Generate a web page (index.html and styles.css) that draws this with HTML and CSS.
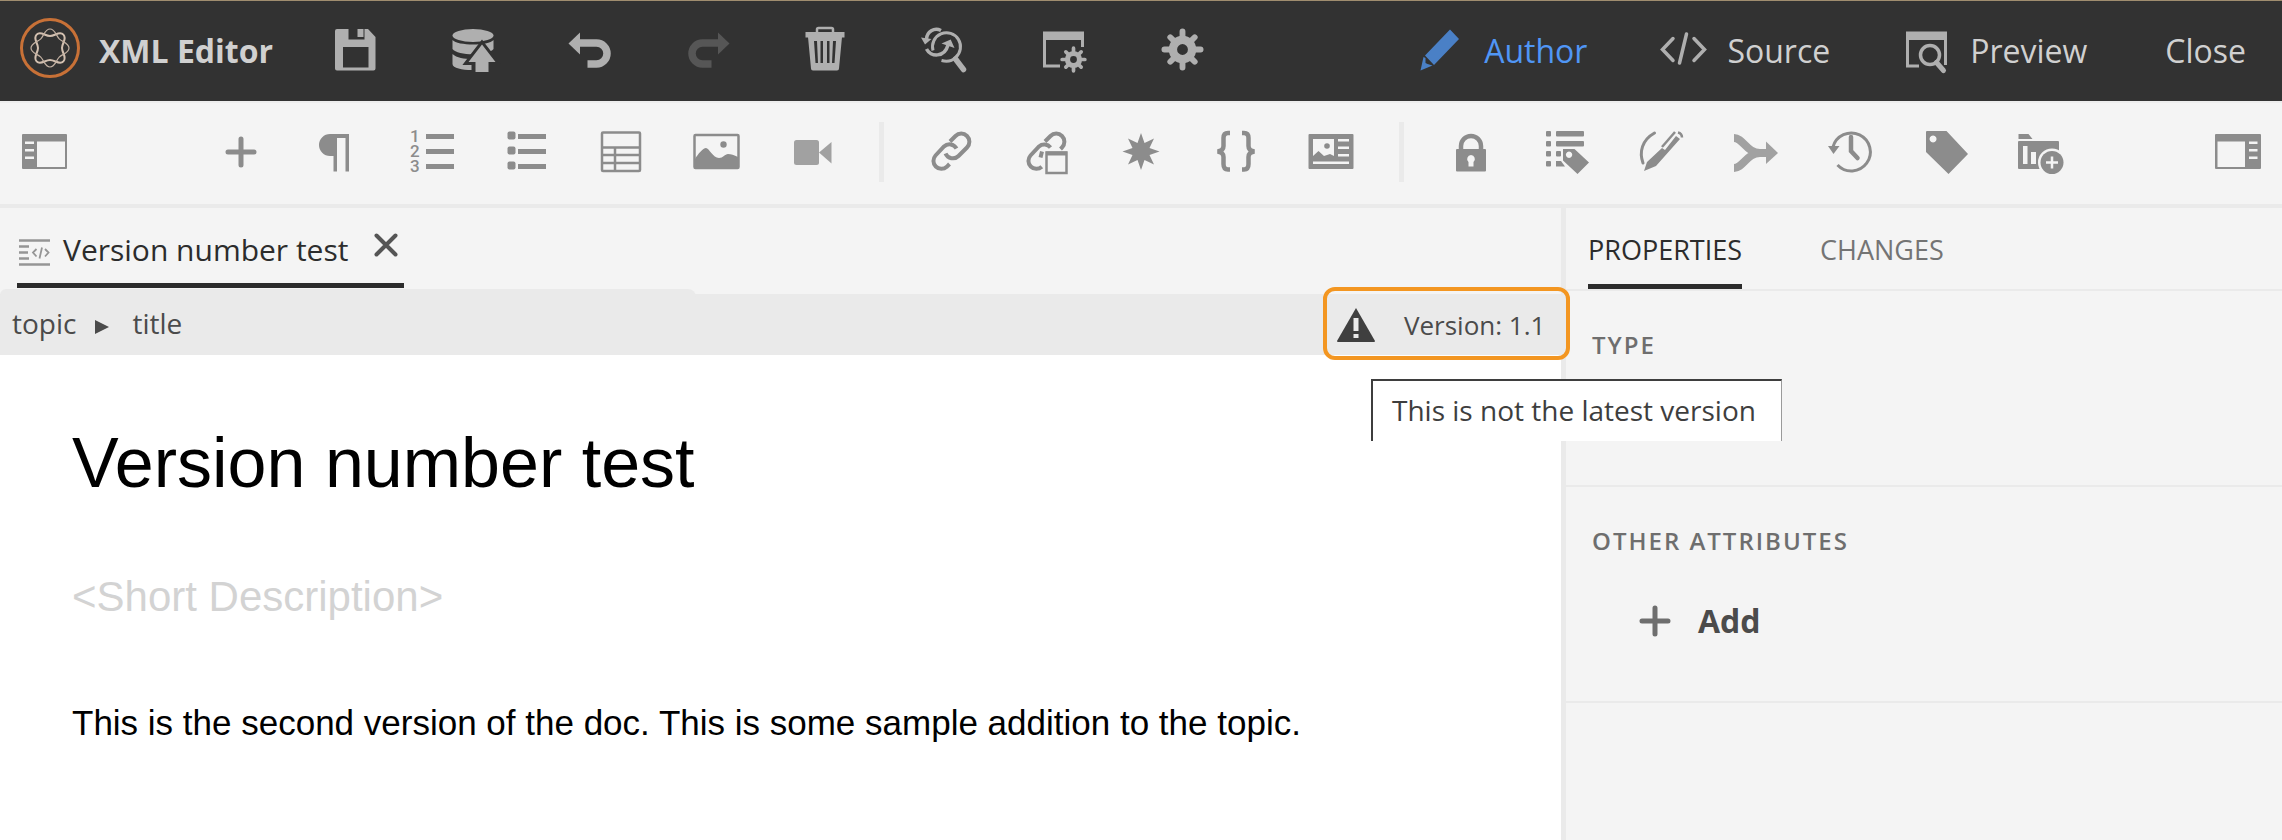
FILE: index.html
```
<!DOCTYPE html>
<html lang="en">
<head>
<meta charset="utf-8">
<title>XML Editor</title>
<link rel="stylesheet" href="styles.css">
</head>
<body>
<svg class="defs" aria-hidden="true">
  <symbol id="gear" viewBox="-22 -22 44 44">
    <circle r="9.800" fill="none" stroke="currentColor" stroke-width="8.500"/>
    <path d="M0-18.500v6M0 18.500v-6M-18.500 0h6M18.500 0h-6M-12.500-12.500l4 4M12.500-12.500l-4 4M-12.500 12.500l4-4M12.500 12.500l-4-4" stroke="currentColor" stroke-width="6" stroke-linecap="round"/>
  </symbol>
  <symbol id="plus" viewBox="0 0 48 48">
    <path d="M24 11v26M11 24h26" stroke="currentColor" stroke-width="5" stroke-linecap="round"/>
  </symbol>
</svg>

<header class="topbar">
  <svg class="logo" viewBox="0 0 60 60" fill="none">
    <circle cx="30" cy="30" r="28.500" stroke="#c87137" stroke-width="3"/>
    <path stroke="#d3c0b0" stroke-width="2" d="M30 18C35 18 39.500 12.700 43.400 16.600S42 25 42 30 47.300 39.500 43.400 43.400 35 42 30 42 20.500 47.300 16.600 43.400 18 35 18 30 12.700 20.500 16.600 16.600 25 18 30 18z"/>
    <path stroke="#c3b1a2" stroke-width="1.200" d="M30 11C35 11 36 17.600 39.200 20.800S49 25 49 30 42.400 36 39.200 39.200 35 49 30 49 24 42.400 20.800 39.200 11 35 11 30 17.600 24 20.800 20.800 25 11 30 11z"/>
  </svg>
  <h1 class="brand">XML Editor</h1>
  <div class="tools">
    <button class="icon-btn" aria-label="Save"><svg viewBox="0 0 48 48"><path fill="currentColor" fill-rule="evenodd" d="M6 2h11.500v10.500h16V2H37l7.500 8v31.500a2 2 0 0 1-2 2H6a2 2 0 0 1-2-2V4a2 2 0 0 1 2-2zM12 20v20.500h25.500V20z"/><path fill="currentColor" d="M26.500 2h6v8h-6z"/></svg></button>
    <button class="icon-btn" aria-label="Save to repository"><svg viewBox="0 0 48 48"><g fill="currentColor"><ellipse cx="24" cy="8.500" rx="20.500" ry="6.500"/><path d="M3.500 13c5 6 36 6 41 0v9c-5 7-36 7-41 0zM3.500 27c4 4 12 5 19 5v11c-9 0-19-2-19-6z"/></g><path d="M33 17.500L46.500 35H39.500V45H26.500V35H19.500z" fill="currentColor" stroke="#323232" stroke-width="6" paint-order="stroke"/></svg></button>
    <button class="icon-btn" aria-label="Undo"><svg viewBox="0 0 48 48"><path d="M12 16h17.500a10.500 10.500 0 0 1 0 21H20.500" fill="none" stroke="currentColor" stroke-width="7.500"/><path d="M13 5.500v22L1.500 16.500z" fill="currentColor"/></svg></button>
    <button class="icon-btn" aria-label="Redo" disabled><svg viewBox="0 0 48 48"><path d="M35 16H17.500a10.500 10.500 0 0 0 0 21H26.500" fill="none" stroke="currentColor" stroke-width="7.500"/><path d="M33 5.500v22L44.500 16.500z" fill="currentColor"/></svg></button>
    <button class="icon-btn" aria-label="Delete"><svg viewBox="0 0 48 48"><path d="M14 6V2.500a1.500 1.500 0 0 1 1.500-1.500h13A1.500 1.500 0 0 1 30 2.500V6" fill="none" stroke="currentColor" stroke-width="2.500"/><path d="M2.500 5h39v5.500h-39z" fill="currentColor"/><path fill="currentColor" fill-rule="evenodd" d="M5 10h34l-3 31.500a2 2 0 0 1-2 2H10a2 2 0 0 1-2-2zM11 14l1.500 22h2.500L14 14zM17.500 14v22H20V14zM24 14v22h2.500V14zM30 14l-1 22h2.500L33 14z"/></svg></button>
    <button class="icon-btn" aria-label="Find and replace"><svg viewBox="0 0 48 48" fill="none" stroke="currentColor" stroke-width="3"><path d="M12 23.500A14 14 0 1 1 34.500 30.500C31 34 26 35 20.500 33.500"/><path d="M34.500 32l8 10.500" stroke-width="5.500" stroke-linecap="round"/><path d="M20 3.500C13 0 6 5 5.500 12" stroke-width="3.500"/><path d="M5.500 22c4 8 18 9 21.500-4" stroke-width="3.500"/><path d="M0 10.500l10.500 1.500L4 17.500zM20.500 16.500L29.700 12.500 33.500 21z" fill="currentColor" stroke="none"/></svg></button>
    <button class="icon-btn" aria-label="Window settings"><svg viewBox="0 0 48 48"><path d="M43.500 20V6H5.500v33H21" fill="none" stroke="currentColor" stroke-width="3"/><path d="M4 5h41v8H4z" fill="currentColor"/><circle cx="34.500" cy="32.500" r="10.500" fill="#323232"/><use href="#gear" x="21" y="19" width="27" height="27"/></svg></button>
    <button class="icon-btn" aria-label="Settings"><svg viewBox="0 0 48 48"><use href="#gear" x="4" y="1" width="43" height="43"/></svg></button>
  </div>
  <nav class="modes">
    <button class="mode mode-active"><svg viewBox="0 0 48 48"><path fill="currentColor" d="M34 2.500l9 9.500L18 38 9 28.500zM7.500 30l2 1v5l2 1 5 1.500L4.500 43.500z"/></svg>Author</button>
    <button class="mode"><svg viewBox="0 0 48 48" fill="none" stroke="currentColor" stroke-width="4" stroke-linecap="round"><path d="M14 11.500L3.500 22.500 14 33.500M35 11.500l10.500 11L35 33.500M27.500 7l-7 29" stroke-width="3.500"/></svg>Source</button>
    <button class="mode"><svg viewBox="0 0 48 48"><path d="M43.500 38V6H5.500v33H17" fill="none" stroke="currentColor" stroke-width="3"/><path d="M4 5h41v8H4z" fill="currentColor"/><circle cx="28" cy="28" r="9.500" fill="none" stroke="currentColor" stroke-width="3.500"/><path d="M34.500 35.500l7 8" stroke="currentColor" stroke-width="5" stroke-linecap="round"/></svg>Preview</button>
    <button class="mode mode-close">Close</button>
  </nav>
</header>

<div class="toolbar" role="toolbar" aria-label="Editing">
  <button class="icon-btn" aria-label="Toggle left panel"><svg viewBox="0 0 48 48"><path fill="currentColor" fill-rule="evenodd" d="M3 6h43a1 1 0 0 1 1 1v33a1 1 0 0 1-1 1H3a1 1 0 0 1-1-1V7a1 1 0 0 1 1-1zM17 13.500V39h28V13.500zM5 13.500v2.500h9v-2.500zM5 21v2.500h9V21zM5 28.500V31h9v-2.500z"/></svg></button>
  <div class="tool-group tool-group-first">
    <button class="icon-btn" aria-label="Insert element"><svg viewBox="0 0 48 48"><use href="#plus" width="48" height="48"/></svg></button>
    <button class="icon-btn" aria-label="Paragraph"><svg viewBox="0 0 48 48"><path fill="currentColor" d="M18 6h19v37.500h-3.500V10H25v33.500h-3.500V28H18A11 11 0 0 1 18 6z"/></svg></button>
    <button class="icon-btn" aria-label="Numbered list"><svg viewBox="0 0 48 48" fill="currentColor"><path d="M19 6h28v5H19zM19 21h28v5H19zM19 36h28v5H19z"/><text class="digit" x="3" y="14">1</text><text class="digit" x="3" y="29">2</text><text class="digit" x="3" y="44">3</text></svg></button>
    <button class="icon-btn" aria-label="Bulleted list"><svg viewBox="0 0 48 48" fill="currentColor"><path d="M16 6h28v5H16zM16 21h28v5H16zM16 36h28v5H16z"/><rect x="5.500" y="3.500" width="8" height="8" rx="2"/><rect x="5.500" y="18.500" width="8" height="8" rx="2"/><rect x="5.500" y="33.500" width="8" height="8" rx="2"/></svg></button>
    <button class="icon-btn" aria-label="Table"><svg viewBox="0 0 48 48" fill="none" stroke="currentColor" stroke-width="2.500"><rect x="5" y="4.500" width="38" height="38.500" rx="1"/><path d="M5 19.500h38M5 27h38M5 35h38M18 20v23"/></svg></button>
    <button class="icon-btn" aria-label="Image"><svg viewBox="0 0 48 48"><rect x="2.500" y="7" width="44" height="33" rx="1" fill="none" stroke="currentColor" stroke-width="2.500"/><path fill="currentColor" d="M3 31c3-5 8-11 11-11s7 10 13 10c4 0 6-4 9-4s6 1 10 3v11H3z"/><circle cx="31.500" cy="16.500" r="3.200" fill="currentColor"/></svg></button>
    <button class="icon-btn light" aria-label="Multimedia"><svg viewBox="0 0 48 48" fill="currentColor"><rect x="7" y="12" width="25" height="25" rx="2.500"/><path d="M32 24.500L44.500 14v21.500z"/></svg></button>
  </div>
  <span class="separator"></span>
  <div class="tool-group">
    <button class="icon-btn" aria-label="Link"><svg viewBox="0 0 48 48" fill="none" stroke="currentColor" stroke-width="4"><path d="M23 13.500l5.500-5.500a8 8 0 0 1 11.500 11.500l-8.500 8.500a8 8 0 0 1-13-2.500"/><path d="M29.500 20.500a8 8 0 0 0-12.500-2L8.500 27.500a8 8 0 0 0 11.300 11.300l2.700-2.800"/></svg></button>
    <button class="icon-btn" aria-label="Cross reference"><svg viewBox="0 0 48 48" fill="none" stroke="currentColor" stroke-width="4"><path d="M23 13.500l5.500-5.500a8 8 0 0 1 11.500 11.500l-1.500 1.500"/><path d="M28.500 19.500a8 8 0 0 0-11.500-1L8.500 27.500a8 8 0 0 0 11.300 11.300M18.500 29.500l1.500-6"/><rect x="24.500" y="24.500" width="20" height="20.500" stroke-width="2.500"/><path d="M24 25.500h21" stroke-width="4"/></svg></button>
    <button class="icon-btn" aria-label="Symbol"><svg viewBox="0 0 48 48"><path fill="currentColor" d="M24 5l3.500 10 9.500-4.500-4.500 9.500 10 3.500-10 3.500 4.500 9.500-9.500-4.500L24 42l-3.500-10-9.500 4.500 4.500-9.500-10-3.500 10-3.500-4.500-9.500 9.500 4.500z"/></svg></button>
    <button class="icon-btn" aria-label="Code"><svg viewBox="0 0 48 48" fill="none" stroke="currentColor" stroke-width="4.500"><path d="M18 5h-2c-3 0-4.500 2-4.500 5v8c0 3-2 5-6 5.500 4 .500 6 2.500 6 5.500v7c0 4 1.500 5.500 4.500 5.500h2M30 5h2c3 0 4.500 2 4.500 5v8c0 3 2 5 6 5.500-4 .500-6 2.500-6 5.500v7c0 4-1.500 5.500-4.500 5.500h-2"/></svg></button>
    <button class="icon-btn" aria-label="Reusable content"><svg viewBox="0 0 48 48"><path fill="currentColor" fill-rule="evenodd" d="M2.500 6h43a1 1 0 0 1 1 1v33a1 1 0 0 1-1 1h-43a1 1 0 0 1-1-1V7a1 1 0 0 1 1-1zM6 11v17l5.500-5L17 28l6-2 4 2V11zM31 11v2.500h11V11zM31 18.500V21h11v-2.500zM31 26v2.500h11V26zM6 33.500V36h36v-2.500z"/><circle cx="20" cy="18" r="2.800" fill="currentColor"/></svg></button>
  </div>
  <span class="separator"></span>
  <div class="tool-group">
    <button class="icon-btn" aria-label="Lock"><svg viewBox="0 0 48 48"><path d="M14 22v-4a10 10 0 0 1 20 0v4" fill="none" stroke="currentColor" stroke-width="4.500"/><path fill="currentColor" fill-rule="evenodd" d="M10 21h28a1 1 0 0 1 1 1v20.500a1 1 0 0 1-1 1H10a1 1 0 0 1-1-1V22a1 1 0 0 1 1-1zM24 27a4 4 0 0 0-2.500 7v4.500h5V34A4 4 0 0 0 24 27z"/></svg></button>
    <button class="icon-btn" aria-label="Condition list"><svg viewBox="0 0 48 48" fill="currentColor"><g><rect x="4" y="3" width="5" height="5.500" rx="1"/><rect x="4" y="13" width="5" height="5.500" rx="1"/><rect x="4" y="23" width="5" height="5.500" rx="1"/><rect x="4" y="33" width="5" height="5.500" rx="1"/><rect x="14" y="3" width="28" height="5.500" rx="1"/><rect x="14" y="13" width="28" height="5.500" rx="1"/><rect x="14" y="23" width="5" height="5.500" rx="1"/><path d="M14 33h5l4 5.500h-9z"/></g><path fill-rule="evenodd" d="M21 21h11.500L47 34.500 35.500 46 21 32.500zM27 23.500a3.200 3.200 0 1 0 .1 0z"/></svg></button>
    <button class="icon-btn" aria-label="Track changes"><svg viewBox="0 0 48 48"><path d="M17.500 5C5 12 2 24 6 35" fill="none" stroke="currentColor" stroke-width="3" stroke-linecap="round"/><path fill="currentColor" d="M25 20l3 2 11-14 4 3-24 27-12 5 3-9z"/><path d="M25 19L38 4" stroke="currentColor" stroke-width="2.500"/><path d="M41 4.500q4 1 4 5" stroke="currentColor" stroke-width="2.500" fill="none"/></svg></button>
    <button class="icon-btn light" aria-label="Merge"><svg viewBox="0 0 48 48"><path d="M2 10c9 0 13 15 26 15h9M2 40c9 0 13-15 26-15" fill="none" stroke="currentColor" stroke-width="8"/><path fill="currentColor" d="M34 13.500L46 25 34 36z"/></svg></button>
    <button class="icon-btn" aria-label="Version history"><svg viewBox="0 0 48 48"><path d="M6 19A19 19 0 1 1 10.500 37" fill="none" stroke="currentColor" stroke-width="3"/><path d="M1 18h11.500L6.500 26z" fill="currentColor"/><path d="M24 9v14l6.500 7" fill="none" stroke="currentColor" stroke-width="4.500" stroke-linecap="round"/></svg></button>
    <button class="icon-btn" aria-label="Version label"><svg viewBox="0 0 48 48"><path fill="currentColor" fill-rule="evenodd" d="M5 3h19.500L46 26 26.500 46 4 24V4a1 1 0 0 1 1-1zM11 7.500a3.500 3.500 0 1 0 .1 0z"/></svg></button>
    <button class="icon-btn" aria-label="Add to collection"><svg viewBox="0 0 48 48"><path fill="currentColor" fill-rule="evenodd" d="M1.500 6h10l4 5h-14zM2 13h39a1 1 0 0 1 1 1v27H2a1 1 0 0 1-1-1V14a1 1 0 0 1 1-1zM6 18v18h4.500V18zM14 24v12h5V24z"/><circle cx="35" cy="34.500" r="11.500" fill="currentColor" stroke="#f4f4f4" stroke-width="5" paint-order="stroke"/><path d="M35 28.500v12M29 34.500h12" stroke="#f4f4f4" stroke-width="2.500"/></svg></button>
  </div>
  <button class="icon-btn toolbar-end" aria-label="Toggle right panel"><svg viewBox="0 0 48 48"><path fill="currentColor" fill-rule="evenodd" d="M2 6h44a1 1 0 0 1 1 1v33a1 1 0 0 1-1 1H2a1 1 0 0 1-1-1V7a1 1 0 0 1 1-1zM3.500 13.500V39H31V13.500zM35 13.500v2.500h8.500v-2.500zM35 21v2.500h8.500V21zM35 28.500V31h8.500v-2.500z"/></svg></button>
</div>

<div class="workspace">
  <main class="editor">
    <div class="doc-tabs">
      <div class="doc-tab">
        <svg class="doc-icon" viewBox="0 0 32 28" fill="none" stroke="#959595" stroke-width="2.500"><path d="M0 2.500h31M0 8.500h10M0 14.500h9M0 20.500h10M0 26.500h31"/><path d="M17.500 11L14 14.500l3.500 4M26 11l3.500 3.500-3.500 4M23 9.500l-2.500 11" stroke-width="1.800"/></svg>
        <span class="doc-name">Version number test</span>
        <button class="doc-close" aria-label="Close tab"><svg viewBox="0 0 24 24"><path d="M2.500 2.500l19 19M21.500 2.500l-19 19" stroke="#555" stroke-width="4" stroke-linecap="round"/></svg></button>
      </div>
    </div>
    <div class="pathbar">
      <nav class="crumbs" aria-label="Element path">
        <a class="crumb" href="#topic">topic</a>
        <svg class="crumb-arrow" viewBox="0 0 14 14"><path d="M0 0l14 7-14 7z" fill="#4b4b4b"/></svg>
        <a class="crumb" href="#title">title</a>
      </nav>
      <div class="version">
        <svg class="warning" viewBox="0 0 38 34"><path d="M19 0l19 33q0 1-1 1H1q-1 0-1-1z" fill="#3f3f3f"/><path d="M19 10v13M19 26v4" stroke="#eaeaea" stroke-width="5"/></svg>
        <span>Version: 1.1</span>
        <div class="tooltip" role="tooltip">This is not the latest version</div>
      </div>
    </div>
    <article class="document" id="topic">
      <h2 class="doc-title" id="title">Version number test</h2>
      <p class="doc-short">&lt;Short Description&gt;</p>
      <p class="doc-body">This is the second version of the doc. This is some sample addition to the topic.</p>
    </article>
  </main>
  <aside class="panel">
    <div class="panel-tabs" role="tablist">
      <button class="panel-tab panel-tab-active" role="tab" aria-selected="true">PROPERTIES</button>
      <button class="panel-tab" role="tab" aria-selected="false">CHANGES</button>
    </div>
    <section class="section section-type"><h3 class="section-title">TYPE</h3></section>
    <section class="section section-other">
      <h3 class="section-title">OTHER ATTRIBUTES</h3>
      <button class="add"><svg viewBox="0 0 48 48"><use href="#plus" width="48" height="48"/></svg>Add</button>
    </section>
  </aside>
</div>
</body>
</html>
```
FILE: styles.css
```
* { box-sizing: border-box; }

body {
  margin: 0;
  min-height: 100vh;
  display: flex;
  flex-direction: column;
  overflow-x: hidden;
  background: #f4f4f4;
  color: #4b4b4b;
  font-family: "Open Sans", "Noto Sans", sans-serif;
}

button {
  padding: 0;
  border: 0;
  background: none;
  color: inherit;
  font: inherit;
  white-space: nowrap;
}

svg { display: block; flex: none; }
h1, h2, h3, p { margin: 0; font-weight: 400; }
.defs { position: absolute; width: 0; height: 0; }

.icon-btn { flex: none; width: 48px; height: 48px; }
.icon-btn svg { width: 48px; height: 48px; overflow: visible; }

/* Top bar */
.topbar {
  display: flex;
  align-items: center;
  height: 101px;
  padding: 0 34px 0 20px;
  border-top: 1px solid #a08d6f;
  background: #323232;
  color: #afafaf;
}
.logo { width: 60px; height: 60px; margin-bottom: 6px; }
.brand {
  margin-left: 19px;
  color: #d0d0d0;
  font-size: 32px;
  font-weight: 700;
  line-height: 48px;
  white-space: nowrap;
}
.tools { display: flex; gap: 70px; margin-left: 58px; }
.tools .icon-btn:disabled { color: #565656; }
.modes { display: flex; gap: 72px; margin-left: auto; }
.mode {
  display: flex;
  align-items: center;
  gap: 20px;
  color: #d0d0d0;
  font-size: 32px;
  line-height: 48px;
}
.mode svg { width: 48px; height: 48px; color: #afafaf; }
.mode-active { color: #5096f5; }
.mode-active svg { color: #4a80c6; }
.mode-close { padding: 0 2px 0 6px; }

/* Editing toolbar */
.toolbar {
  display: flex;
  align-items: center;
  height: 107px;
  padding: 0 20px 4px;
  border-top: 2px solid #ededed;
  border-bottom: 4px solid #eaeaea;
  color: #8c8c8c;
}
.tool-group { display: flex; gap: 47px; }
.tool-group-first { margin-left: 149px; }
.light { color: #a1a1a1; }
.separator { flex: none; width: 5px; height: 60px; margin: 0 43px 0 44px; background: #eaeaea; }
.toolbar-end { margin-left: auto; }
.digit { font-family: Roboto, sans-serif; font-size: 17px; font-weight: 500; }

/* Workspace */
.workspace { flex: 1; display: flex; }
.editor {
  flex: 1;
  min-width: 0;
  display: flex;
  flex-direction: column;
  border-right: 5px solid #eaeaea;
}
.doc-tabs { display: flex; height: 81px; padding: 0 17px 1px; }
.doc-tab {
  display: flex;
  align-items: center;
  padding: 8px 6px 0 2px;
  border-bottom: 5px solid #2c2c2c;
}
.doc-icon { width: 32px; height: 28px; margin-top: 4px; }
.doc-name {
  margin-left: 12px;
  color: #2c2c2c;
  font-size: 30px;
  line-height: 40px;
  white-space: nowrap;
}
.doc-close { width: 24px; height: 24px; margin: 0 0 10px 26px; }
.doc-close svg { width: 24px; height: 24px; }

.pathbar {
  position: relative;
  height: 66px;
  background: linear-gradient(#f4f4f4 5px, #eaeaea 5px);
}
.crumbs {
  display: flex;
  align-items: center;
  width: 696px;
  height: 100%;
  padding: 2px 12px 0;
  border-radius: 6px 8px 0 0;
  background: #eaeaea;
}
.crumb {
  color: #4b4b4b;
  font-size: 28px;
  line-height: 40px;
  text-decoration: none;
}
.crumb-arrow { width: 14px; height: 14px; margin: 8px 23px 0 19px; }
.version {
  position: absolute;
  top: -2px;
  right: -9px;
  display: flex;
  align-items: center;
  gap: 29px;
  width: 247px;
  height: 73px;
  padding: 2px 10px 0;
  border: 4px solid #f39621;
  border-radius: 12px;
  font-size: 26px;
  line-height: 40px;
  white-space: nowrap;
}
.warning { width: 38px; height: 34px; }
.tooltip {
  position: absolute;
  top: 88px;
  left: 44px;
  padding: 9px 25px 11px 19px;
  border: solid #3e3e3e;
  border-width: 2px 1px 0 2px;
  border-right-color: #9a9a9a;
  background: #fff;
  color: #3e3e3e;
  font-size: 28px;
  line-height: 40px;
}

.document {
  flex: 1;
  padding: 68px 72px;
  background: #fff;
  color: #000;
  font-family: "Liberation Sans", Arial, sans-serif;
}
.doc-title { font-size: 70px; line-height: 80px; }
.doc-short { margin-top: 70px; color: #d3d3d3; font-size: 42px; line-height: 48px; }
.doc-body { margin-top: 82px; font-size: 35px; line-height: 40px; }

/* Properties panel */
.panel { flex: none; width: 716px; }
.panel-tabs {
  display: flex;
  gap: 78px;
  height: 83px;
  padding-left: 22px;
  border-bottom: 2px solid #eaeaea;
}
.panel-tab {
  padding-top: 7px;
  border-bottom: 5px solid transparent;
  color: #747474;
  font-size: 27px;
}
.panel-tab-active { border-color: #2c2c2c; color: #2c2c2c; }
.section { padding: 38px 26px 0; border-bottom: 2px solid #eaeaea; }
.section-type { padding-bottom: 124px; }
.section-other { padding-bottom: 56px; }
.section-title {
  color: #6e6e6e;
  font-size: 24px;
  font-weight: 600;
  line-height: 32px;
  letter-spacing: 2px;
}
.add {
  display: flex;
  align-items: center;
  gap: 19px;
  margin: 40px 0 0 39px;
  font-size: 32px;
  font-weight: 700;
  line-height: 48px;
}
.add svg { width: 48px; height: 48px; color: #6e6e6e; }
```
